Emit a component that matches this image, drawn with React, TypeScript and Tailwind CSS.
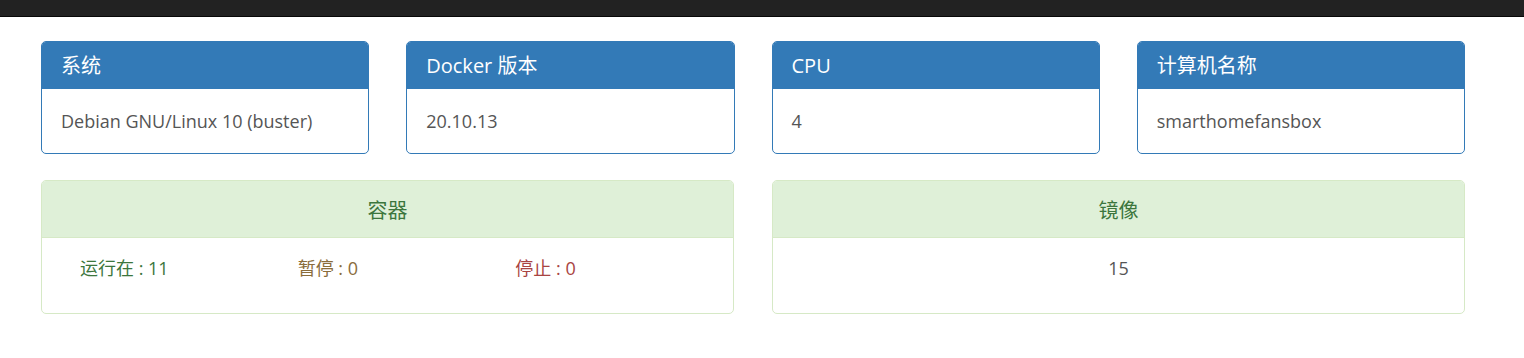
import React from 'react'

const font = { fontFamily: '"Open Sans", "Noto Sans CJK SC", sans-serif' }

interface InfoCardProps {
  title: string
  value: string
}

function InfoCard({ title, value }: InfoCardProps) {
  return (
    <div className="border border-[#337ab7] rounded-[5px] overflow-hidden bg-white">
      <div className="h-[47px] flex items-center px-[19px] bg-[#337ab7] text-white text-[20px]">
        {title}
      </div>
      <div className="h-[64px] flex items-center px-[19px] text-[18px] text-[#555]">{value}</div>
    </div>
  )
}

export default function App() {
  const infos = [
    { title: '系统', value: 'Debian GNU/Linux 10 (buster)' },
    { title: 'Docker 版本', value: '20.10.13' },
    { title: 'CPU', value: '4' },
    { title: '计算机名称', value: 'smarthomefansbox' }
  ]

  return (
    <div className="w-[1524px] h-[358px] bg-white" style={font}>
      {/* Navbar edge */}
      <div className="h-[17px] bg-[#222] border-b border-[#080808]" />

      <div className="ml-[41px] w-[1424px] pt-[24px]">
        {/* Info cards */}
        <div className="grid grid-cols-4 gap-[37px]">
          {infos.map((info) => (
            <InfoCard key={info.title} title={info.title} value={info.value} />
          ))}
        </div>

        {/* Containers / images */}
        <div className="grid grid-cols-2 gap-[38px] mt-[26px]">
          <div className="border border-[#d6e9c6] rounded-[5px] overflow-hidden bg-white">
            <div className="h-[57px] flex items-center justify-center pt-[4px] bg-[#dff0d8] border-b border-[#d6e9c6] text-[20px] text-[#3c763d]">
              容器
            </div>
            <div className="h-[75px] pt-[18px] px-[19px] grid grid-cols-3 text-[18px] leading-[25px]">
              <div className="px-[19px] text-[#3c763d]">运行在 : 11</div>
              <div className="px-[19px] text-[#8a6d3b]">暂停 : 0</div>
              <div className="px-[19px] text-[#a94442]">停止 : 0</div>
            </div>
          </div>
          <div className="border border-[#d6e9c6] rounded-[5px] overflow-hidden bg-white">
            <div className="h-[57px] flex items-center justify-center pt-[4px] bg-[#dff0d8] border-b border-[#d6e9c6] text-[20px] text-[#3c763d]">
              镜像
            </div>
            <div className="h-[75px] pt-[18px] text-center text-[18px] leading-[25px] text-[#555]">15</div>
          </div>
        </div>
      </div>
    </div>
  )
}
